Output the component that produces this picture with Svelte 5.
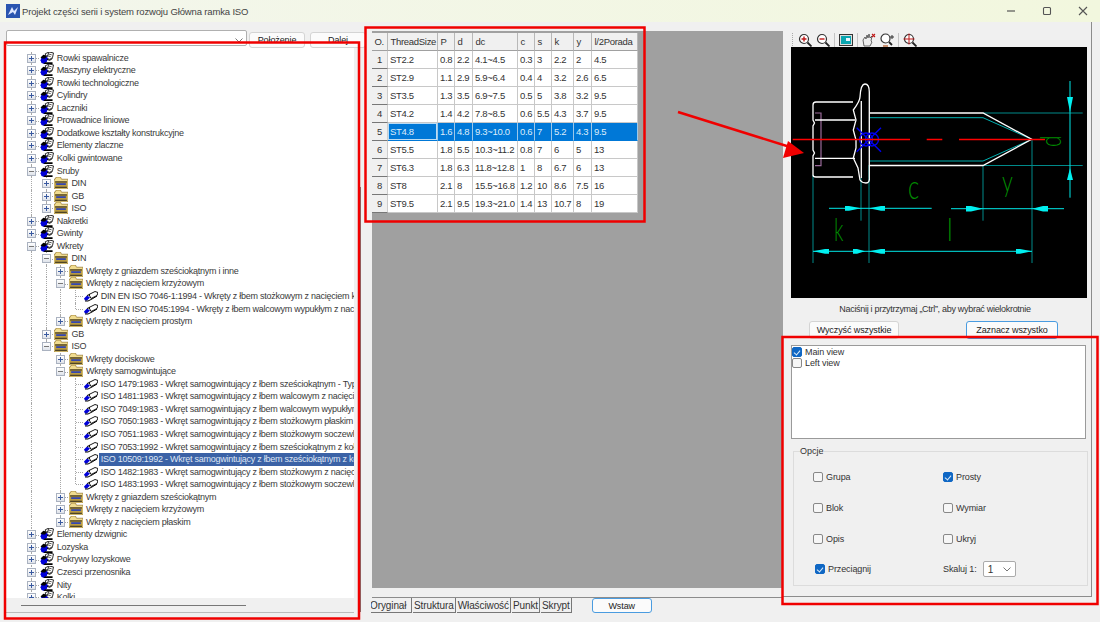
<script>
  // tree rows: l = level, t = label, o = open state (undefined means leaf)
  const rows = [
    { l: 0, t: "Rowki spawalnicze", o: false },
    { l: 0, t: "Maszyny elektryczne", o: false },
    { l: 0, t: "Rowki technologiczne", o: false },
    { l: 0, t: "Cylindry", o: false },
    { l: 0, t: "Laczniki", o: false },
    { l: 0, t: "Prowadnice liniowe", o: false },
    { l: 0, t: "Dodatkowe kształty konstrukcyjne", o: false },
    { l: 0, t: "Elementy zlaczne", o: false },
    { l: 0, t: "Kolki gwintowane", o: false },
    { l: 0, t: "Sruby", o: true },
    { l: 1, t: "DIN", o: false },
    { l: 1, t: "GB", o: false },
    { l: 1, t: "ISO", o: false },
    { l: 0, t: "Nakretki", o: false },
    { l: 0, t: "Gwinty", o: false },
    { l: 0, t: "Wkrety", o: true },
    { l: 1, t: "DIN", o: true },
    { l: 2, t: "Wkręty z gniazdem sześciokątnym i inne", o: false },
    { l: 2, t: "Wkręty z nacięciem krzyżowym", o: true },
    { l: 3, t: "DIN EN ISO 7046-1:1994 - Wkręty z łbem stożkowym z nacięciem krzyżowym" },
    { l: 3, t: "DIN EN ISO 7045:1994 - Wkręty z łbem walcowym wypukłym z nacięciem krzyżowym" },
    { l: 2, t: "Wkręty z nacięciem prostym", o: false },
    { l: 1, t: "GB", o: false },
    { l: 1, t: "ISO", o: true },
    { l: 2, t: "Wkręty dociskowe", o: false },
    { l: 2, t: "Wkręty samogwintujące", o: true },
    { l: 3, t: "ISO 1479:1983 - Wkręt samogwintujący z łbem sześciokątnym - Typ AB" },
    { l: 3, t: "ISO 1481:1983 - Wkręt samogwintujący z łbem walcowym z nacięciem" },
    { l: 3, t: "ISO 7049:1983 - Wkręt samogwintujący z łbem walcowym wypukłym" },
    { l: 3, t: "ISO 7050:1983 - Wkręt samogwintujący z łbem stożkowym płaskim" },
    { l: 3, t: "ISO 7051:1983 - Wkręt samogwintujący z łbem stożkowym soczewkowym" },
    { l: 3, t: "ISO 7053:1992 - Wkręt samogwintujący z łbem sześciokątnym z kołnierzem" },
    { l: 3, t: "ISO 10509:1992 - Wkręt samogwintujący z łbem sześciokątnym z kołnierzem", sel: true },
    { l: 3, t: "ISO 1482:1983 - Wkręt samogwintujący z łbem stożkowym z nacięciem" },
    { l: 3, t: "ISO 1483:1993 - Wkręt samogwintujący z łbem stożkowym soczewkowym" },
    { l: 2, t: "Wkręty z gniazdem sześciokątnym", o: false },
    { l: 2, t: "Wkręty z nacięciem krzyżowym", o: false },
    { l: 2, t: "Wkręty z nacięciem płaskim", o: false },
    { l: 0, t: "Elementy dzwignic", o: false },
    { l: 0, t: "Lozyska", o: false },
    { l: 0, t: "Pokrywy lozyskowe", o: false },
    { l: 0, t: "Czesci przenosnika", o: false },
    { l: 0, t: "Nity", o: false },
    { l: 0, t: "Kolki", o: false },
  ];

  // does another row of this level follow before the parent ends?
  function continues(i, level) {
    for (let j = i + 1; j < rows.length; j++) {
      if (rows[j].l < level) return false;
      if (rows[j].l === level) return true;
    }
    return level === 0;
  }

  const columns = ["ThreadSize", "P", "d", "dc", "c", "s", "k", "y", "l/2Porada"];
  const widths = [16, 50, 17, 18, 45, 17, 17, 22, 18, 46];
  const sizes = [
    ["ST2.2", "0.8", "2.2", "4.1~4.5", "0.3", "3", "2.2", "2", "4.5"],
    ["ST2.9", "1.1", "2.9", "5.9~6.4", "0.4", "4", "3.2", "2.6", "6.5"],
    ["ST3.5", "1.3", "3.5", "6.9~7.5", "0.5", "5", "3.8", "3.2", "9.5"],
    ["ST4.2", "1.4", "4.2", "7.8~8.5", "0.6", "5.5", "4.3", "3.7", "9.5"],
    ["ST4.8", "1.6", "4.8", "9.3~10.0", "0.6", "7", "5.2", "4.3", "9.5"],
    ["ST5.5", "1.8", "5.5", "10.3~11.2", "0.8", "7", "6", "5", "13"],
    ["ST6.3", "1.8", "6.3", "11.8~12.8", "1", "8", "6.7", "6", "13"],
    ["ST8", "2.1", "8", "15.5~16.8", "1.2", "10", "8.6", "7.5", "16"],
    ["ST9.5", "2.1", "9.5", "19.3~21.0", "1.4", "13", "10.7", "8", "19"],
  ];

  const tabs = ["Oryginał", "Struktura", "Właściwość", "Punkt", "Skrypt"];
  const options = [
    { t: "Grupa", on: false },
    { t: "Prosty", on: true },
    { t: "Blok", on: false },
    { t: "Wymiar", on: false },
    { t: "Opis", on: false },
    { t: "Ukryj", on: false },
  ];
</script>

<svg class="defs" width="0" height="0" aria-hidden="true">
  <symbol id="ico-group" viewBox="0 0 14 13">
    <path d="M5 2 9 0l5 1-1 5-3 2-3-1z" fill="#fff" stroke="#000" stroke-width=".9" />
    <path d="M8 2l4 1M7 4l4 1M9 0 7 6" stroke="#000" stroke-width=".7" />
    <path d="M1 6l5-1 2 2-1 3-3 3-3-1-1-3z" fill="#0000d8" />
    <path d="M0 6l3-3 4 1-2 3-3 0z" fill="#000" />
    <path d="M5 11h8v2H3z" fill="#000" />
    <path d="M7 8l3 1 3-2" stroke="#000" stroke-width="1" fill="none" />
  </symbol>
  <symbol id="ico-folder" viewBox="0 0 13 11">
    <path d="M0 2h1l1-2h4l1 2h6v9H0z" fill="#f0dc90" stroke="#8a6a20" stroke-width=".6" />
    <rect x="1" y="4" width="11" height="6" fill="#b89a40" />
    <path d="M1 4.500h11" stroke="#3a3420" />
    <path d="M2 6.500h9" stroke="#1030d0" stroke-width="1.300" />
    <path d="M1 9.500h11" stroke="#3a3420" />
  </symbol>
  <symbol id="ico-part" viewBox="0 0 14 11">
    <path d="M5 4 11 1l3 1-1 3-6 3z" fill="#fff" stroke="#000" stroke-width=".9" />
    <path d="M0 8l3-3 3 2-3 3H1z" fill="#0000d8" />
    <path d="M1 10.500h3l4-2 5-3" stroke="#000" stroke-width="1" fill="none" />
    <path d="M3 5l3-1" stroke="#000" stroke-width="1" />
  </symbol>
</svg>

<div class="window">
  <header class="titlebar">
    <svg class="appicon" width="14" height="14" viewBox="0 0 14 14">
      <rect width="14" height="14" fill="#2a55b0" />
      <path d="M2 11 6 3l2 4 4-4-3 8-2-3z" fill="#dfe8ff" />
    </svg>
    <span class="title">Projekt części serii i system rozwoju Główna ramka ISO</span>
    <div class="winbtns">
      <svg width="10" height="10" viewBox="0 0 10 10"><path d="M1 5h8" stroke="#555" stroke-width="1.2" /></svg>
      <svg width="10" height="10" viewBox="0 0 10 10"><rect x="1.5" y="1.5" width="7" height="7" rx="1" fill="none" stroke="#555" stroke-width="1.1" /></svg>
      <svg width="10" height="10" viewBox="0 0 10 10"><path d="M1 1l8 8M9 1l-8 8" stroke="#555" stroke-width="1.1" /></svg>
    </div>
  </header>

  <div class="main">
    <section class="left">
      <div class="searchbar">
        <div class="combo">
          <svg class="chev" width="8" height="5" viewBox="0 0 8 5"><path d="M.5.5 4 4 7.5.5" fill="none" stroke="#777" /></svg>
        </div>
        <button class="btn">Położenie</button>
        <button class="btn">Dalej</button>
      </div>
      <div class="tree">
        {#each rows as row, i}
          <div class="row">
            {#each Array(row.l) as _, k}
              <span class="cell">{#if continues(i, k)}<i class="v"></i>{/if}</span>
            {/each}
            <span class="cell">
              <i class="v" class:half={!continues(i, row.l)}></i>
              <i class="h"></i>
              {#if row.o !== undefined}
                <b class="toggle">
                  <svg width="9" height="9" viewBox="0 0 9 9">
                    <path d="M2 4.5h5" stroke={row.o ? "#777" : "#3a5aa0"} />
                    {#if !row.o}<path d="M4.5 2v5" stroke="#3a5aa0" />{/if}
                  </svg>
                </b>
              {/if}
            </span>
            <svg class="ico" width="14" height="12">
              <use href={row.o === undefined ? "#ico-part" : row.l === 0 ? "#ico-group" : "#ico-folder"} />
            </svg>
            <span class="label" class:sel={row.sel}>{row.t}</span>
          </div>
        {/each}
      </div>
      <div class="hscroll"><div class="thumb"></div></div>
    </section>

    <section class="center">
      <div class="grey">
        <table>
          <colgroup>
            {#each widths as w}<col style="width:{w}px" />{/each}
          </colgroup>
          <thead>
            <tr>
              <th class="corner">O.</th>
              {#each columns as c}<th>{c}</th>{/each}
            </tr>
          </thead>
          <tbody>
            {#each sizes as s, i}
              <tr class:active={i === 4}>
                <th class="rowhead">{i + 1}</th>
                {#each s as v}<td>{v}</td>{/each}
              </tr>
            {/each}
          </tbody>
        </table>
      </div>
      <div class="tabs">
        {#each tabs as t, i}
          <span class="tab" class:current={i === 0}><span>{t}</span></span>
        {/each}
        <button class="btn wstaw">Wstaw</button>
      </div>
    </section>

    <section class="right">
      <div class="tools">
        <span class="grip"></span>
        <svg width="14" height="14" viewBox="0 0 14 14"><circle cx="6" cy="6" r="4.5" fill="#fff" stroke="#333" stroke-width="1.2" /><path d="M3.5 6h5M6 3.5v5" stroke="#c01818" stroke-width="1.4" /><path d="M9.5 9.5l4 4" stroke="#222" stroke-width="1.8" /></svg>
        <svg width="14" height="14" viewBox="0 0 14 14"><circle cx="6" cy="6" r="4.5" fill="#fff" stroke="#333" stroke-width="1.2" /><path d="M3.5 6h5" stroke="#c01818" stroke-width="1.4" /><path d="M9.5 9.5l4 4" stroke="#222" stroke-width="1.8" /></svg>
        <span class="sep"></span>
        <svg width="14" height="12" viewBox="0 0 14 12"><rect x=".5" y=".5" width="13" height="11" fill="#ddd" stroke="#333" /><rect x="2" y="2" width="10" height="8" fill="#0aa5b0" /><rect x="7" y="4" width="4" height="3" fill="#e8f4ff" /></svg>
        <span class="sep"></span>
        <svg width="14" height="14" viewBox="0 0 14 14"><path d="M2 13 1 7l2-3 1 2 1-4 1 3 1-4 1 4 2-2-1 5 1 1-2 4z" fill="#eee" stroke="#444" stroke-width=".8" /><path d="M10 1l3 3M13 1l-3 3" stroke="#c01818" stroke-width="1.1" /></svg>
        <svg width="14" height="14" viewBox="0 0 14 14"><circle cx="5.5" cy="5.5" r="4.5" fill="#fff" stroke="#333" stroke-width="1.2" /><path d="M9 9l3 3" stroke="#222" stroke-width="1.8" /><path d="M10 4h4M12 2v4" stroke="#333" /><path d="M3 13h5" stroke="#c89070" stroke-width="2" /></svg>
        <span class="sep"></span>
        <svg width="14" height="14" viewBox="0 0 14 14"><circle cx="6" cy="6" r="4.5" fill="#fff" stroke="#333" stroke-width="1.2" /><path d="M6 .5v11M.5 6h11" stroke="#c01818" /><path d="M9.5 9.5l4 4" stroke="#222" stroke-width="1.8" /></svg>
      </div>

      <svg class="cad" viewBox="791 47 296 251" width="296" height="251">
        <g fill="none" stroke="#008a8a" stroke-width="1">
          <path d="M813 175v88M861 178v42.700M869 165v98M983 165v55.700M1032 140v123" />
          <path d="M983 113h99.700M983 165.500h99.700" />
          <path d="M869.500 117.700H983l48.700 21.600-48.700 21.700H869.500" stroke="#00b0b0" />
        </g>
        <g fill="none" stroke="#00e8e8" stroke-width="1">
          <path d="M1070 81v116.700M829 208.300h102.700M951 208.700h113M813 251.300h219" />
        </g>
        <g fill="#00f0f0">
          <path d="M1067 97h6l-3 15zM1067 180h6l-3-12z" />
          <path d="M845 206h4l12 2.300-12 2.400h-4zM885 206h-4l-12 2.300 12 2.400h4z" />
          <path d="M966 206h5l12 2.700-12 2.700h-5zM1048 206h-5l-11 2.700 11 2.700h5z" />
          <path d="M829 249h-4l-12 2.300 12 2.400h4zM853 249h4l8 2.300-8 2.400h-4zM885 249h-4l-12 2.300 12 2.400h4zM1016 249h4l12 2.300-12 2.400h-4z" />
        </g>
        <path d="M815 113h6v52.700h-6" fill="none" stroke="#9a6a9a" stroke-width="1.200" />
        <g fill="none" stroke="#fff" stroke-width="1.300">
          <path d="M853 102h-37q-3 0-3 3v15l1.500 3-1.500 3v24l1.500 3-1.500 3v19q0 2 3 2h37" />
          <path d="M815 120h40M815 158.300h40M861.300 101v77" />
          <path d="M869.500 113H983l48.700 26.300L983 165.500H869.500" />
          <path d="M869.300 92q0-8-4.300-8t-5 13q0 4-6.700 13l2.700 10-2.700 10 2.700 10 0 8-2.700 10 4.700 10 2 12q2 3 6 3t3.300-6z" />
        </g>
        <g fill="none" stroke="#0000f0" stroke-width="1.400">
          <path d="M856.700 127.700l24.300 24M881 127.700l-24.300 24" />
          <circle cx="866" cy="139.500" r="6.500" />
          <circle cx="872" cy="139.500" r="6.500" />
        </g>
        <path d="M792.700 139.500H910M926.700 139.500h15.600M959 139.500h86" stroke="#ff0000" stroke-width="1.400" fill="none" />
        <g class="cadtext">
          <text transform="translate(908 199) scale(.72 1)" font-size="33">c</text>
          <text transform="translate(1002 192) scale(.72 1)" font-size="30">y</text>
          <text transform="translate(834 241) scale(.62 1)" font-size="32">k</text>
          <text transform="translate(947 241) scale(.8 1)" font-size="32">l</text>
          <text transform="translate(1061 147) rotate(-90) scale(.7 1)" font-size="30">d</text>
        </g>
      </svg>

      <p class="hint">Naciśnij i przytrzymaj „Ctrl”, aby wybrać wielokrotnie</p>

      <div class="pair">
        <button class="btn">Wyczyść wszystkie</button>
        <button class="btn primary">Zaznacz wszystko</button>
      </div>

      <div class="list">
        <label><span class="check on"></span>Main view</label>
        <label><span class="check"></span>Left view</label>
      </div>

      <fieldset>
        <legend>Opcje</legend>
        <div class="opts">
          {#each options as o}
            <label><span class="check" class:on={o.on}></span>{o.t}</label>
          {/each}
          <label class="drag"><span class="check on"></span>Przeciągnij</label>
          <div class="scale">
            <span>Skaluj 1:</span>
            <div class="mini">1
              <svg width="8" height="5" viewBox="0 0 8 5"><path d="M.5.5 4 4 7.5.5" fill="none" stroke="#777" /></svg>
            </div>
          </div>
        </div>
      </fieldset>
    </section>
  </div>

  <!-- red annotations sitting over the screenshot -->
  <svg class="marks" width="1100" height="622" viewBox="0 0 1100 622">
    <g fill="none" stroke="#f00000" stroke-width="2.500">
      <rect x="5" y="42.500" width="354" height="576" />
      <rect x="365.500" y="27.500" width="279" height="194" />
      <rect x="782.500" y="337" width="315" height="267" />
    </g>
    <path d="M678 112 790 147" stroke="#f00000" stroke-width="2.500" />
    <path d="M804 153 783 158 788 141z" fill="#f00000" />
  </svg>
</div>

<style>
  :global(body) {
    margin: 0;
    background: #f0f0f0;
  }

  .defs {
    position: absolute;
  }

  .window {
    position: relative;
    width: 1100px;
    height: 622px;
    overflow: hidden;
    font-family: "Liberation Sans", Arial, sans-serif;
    font-size: 9px;
    color: #333;
    background: #f0f0f0;
  }

  .titlebar {
    height: 22px;
    display: flex;
    align-items: center;
    padding-left: 6px;
    background: linear-gradient(90deg, #f3f6ec, #f2f7de);
  }

  .title {
    margin-left: 2px;
    font-size: 9.500px;
    letter-spacing: -0.15px;
    color: #444;
  }

  .winbtns {
    margin-left: auto;
    margin-right: 12px;
    display: flex;
    gap: 26px;
  }

  .main {
    display: flex;
    height: 600px;
  }

  .left {
    width: 372px;
    flex: none;
    padding-top: 8px;
    box-sizing: border-box;
    /* splitter edge just right of the tree */
    background: linear-gradient(#777, #777) no-repeat 360px 165px / 1px 425px;
  }

  .searchbar {
    display: flex;
    height: 14px;
    margin-left: 6px;
  }

  .combo {
    width: 241px;
    height: 16px;
    background: #fff;
    border: 1px solid #b0b0b0;
    border-radius: 2px;
    box-sizing: border-box;
    position: relative;
  }

  .chev {
    position: absolute;
    right: 3px;
    top: 7px;
  }

  .btn {
    font: inherit;
    color: #222;
    background: #fbfbfb;
    border: 1px solid #d4d4d4;
    border-radius: 3px;
    padding: 0;
    height: 16px;
    letter-spacing: -0.1px;
  }

  .searchbar .btn {
    width: 56px;
    margin-left: 2px;
    margin-top: 2px;
  }

  .searchbar .btn + .btn {
    margin-left: 5px;
  }

  .tree {
    margin: 0 0 0 6px;
    width: 348px;
    height: 554px;
    padding-top: 7.600px;
    box-sizing: border-box;
    background: #fff;
    overflow: hidden;
  }

  .row {
    display: flex;
    height: 12.550px;
    white-space: nowrap;
    padding-left: 18px;
  }

  .cell {
    width: 14.700px;
    flex: none;
    position: relative;
  }

  .v {
    position: absolute;
    left: 7px;
    top: 0;
    bottom: 0;
    border-left: 1px dotted #a8a8a8;
  }

  .v.half {
    bottom: 50%;
  }

  .h {
    position: absolute;
    left: 8px;
    right: 0;
    top: 50%;
    border-top: 1px dotted #a8a8a8;
  }

  .toggle {
    position: absolute;
    left: 3px;
    top: 2px;
    width: 9px;
    height: 9px;
    box-sizing: border-box;
    border: 1px solid #aab2c0;
    background: linear-gradient(#fff, #dfe3ea);
  }

  .toggle svg {
    position: absolute;
    left: -1px;
    top: -1px;
  }

  .ico {
    flex: none;
    margin-left: 1px;
    margin-top: 0;
    width: 14px;
    height: 12px;
  }

  .label {
    margin-left: 2px;
    padding: 0 1px;
    line-height: 12.550px;
    letter-spacing: -0.25px;
    color: #3a3a3a;
    flex: 1;
    overflow: hidden;
  }

  .label.sel {
    background: #3b62a6;
    color: #dfe6f4;
    margin-left: 1px;
    padding-left: 2px;
  }

  .hscroll {
    margin-left: 6px;
    width: 348px;
    height: 14px;
    border-bottom: 1px solid #bbb;
    position: relative;
  }

  .thumb {
    position: absolute;
    left: 15px;
    top: 7px;
    width: 225px;
    height: 1px;
    background: #777;
  }

  .center {
    width: 411px;
    flex: none;
  }

  .grey {
    margin-top: 9px;
    height: 557px;
    background: #a0a0a0;
    padding-top: 2px;
    box-sizing: border-box;
  }

  table {
    border-collapse: separate;
    border-spacing: 0;
    table-layout: fixed;
    width: 266px;
    font-size: 9.500px;
    letter-spacing: -0.3px;
    color: #333;
  }

  th {
    height: 18px;
    padding: 0 0 0 2.500px;
    box-sizing: border-box;
    font-weight: normal;
    text-align: left;
    background: #f0f0f0;
    border-right: 1px solid #b8b8b8;
    border-bottom: 1px solid #a0a0a0;
    white-space: nowrap;
    overflow: hidden;
  }

  .rowhead {
    text-align: center;
    padding: 0;
    border-bottom: 1px solid #777;
    border-right: 1px solid #ccc;
  }

  td {
    height: 18px;
    padding: 0 0 0 2px;
    box-sizing: border-box;
    background: #fff;
    border-right: 1px solid #c8c8c8;
    border-bottom: 1px solid #c8c8c8;
    white-space: nowrap;
    overflow: hidden;
  }

  .active td {
    background: #0078d7;
    color: #dcecfa;
    border-right-color: #9cc8ea;
    border-bottom-color: #0078d7;
  }

  .active td:first-of-type {
    box-shadow: inset 0 0 0 1px #bcdcf4;
  }

  .tabs {
    display: flex;
    height: 33px;
    margin-top: 9px;
    border-top: 1px solid #8c8c8c;
    align-items: flex-start;
    font-size: 10px;
    letter-spacing: -0.1px;
  }

  .tab {
    height: 14px;
    overflow: hidden;
    border-right: 1px solid #777;
    border-bottom: 1px solid #777;
    padding: 0 1px;
    line-height: 15px;
    color: #333;
    flex: none;
    margin-right: 1px;
  }

  .tab.current {
    width: 40px;
    padding: 0;
    margin-left: -1px;
    background: #f0f0f0;
  }

  .tab.current span {
    margin-left: -1px;
    display: block;
  }

  .wstaw {
    width: 60px;
    height: 15px;
    margin-left: 19px;
    border-color: #4a9ce0;
    font-size: 9px;
  }

  .right {
    width: 309px;
    flex: none;
    border-right: 1px solid #8c8c8c;
    border-bottom: 1px solid #8c8c8c;
    height: 575px;
    margin-top: 0;
    padding: 10px 0 0 8px;
    box-sizing: border-box;
  }

  .tools {
    display: flex;
    align-items: center;
    height: 15px;
    gap: 4px;
    padding-left: 7px;
    position: relative;
  }

  .grip {
    position: absolute;
    left: 1px;
    top: 1px;
    height: 13px;
    border-left: 1px dotted #aaa;
  }

  .sep {
    width: 1px;
    height: 14px;
    background: #c4c4c4;
  }

  .cad {
    display: block;
    background: #000;
  }

  .cadtext text {
    fill: #008a00;
    font-family: "Lato", "Liberation Sans", sans-serif;
    font-weight: 300;
  }

  .hint {
    margin: 5px 0 0;
    padding-right: 12px;
    height: 12px;
    text-align: center;
    font-size: 9px;
    letter-spacing: -0.3px;
    color: #333;
    line-height: 12px;
  }

  .pair {
    display: flex;
    margin-top: 6px;
    padding-left: 18px;
    gap: 67px;
    height: 18px;
  }

  .pair .btn {
    width: 90px;
    height: 18px;
  }

  .pair .primary {
    width: 92px;
    border-color: #4a9ce0;
  }

  .list {
    width: 295px;
    height: 94px;
    margin-top: 6px;
    background: #fff;
    border: 1px solid #9a9a9a;
    box-sizing: border-box;
  }

  .list label {
    display: flex;
    align-items: center;
    height: 11px;
    gap: 3px;
    letter-spacing: -0.1px;
  }

  .check {
    width: 10px;
    height: 10px;
    flex: none;
    box-sizing: border-box;
    border: 1px solid #888;
    border-radius: 2px;
    background: #f6f6f6;
    position: relative;
  }

  .check.on {
    background: #0f67c4;
    border-color: #0f67c4;
  }

  .check.on::after {
    content: "";
    position: absolute;
    left: 2px;
    top: 1px;
    width: 3px;
    height: 5px;
    border: solid #dcecfa;
    border-width: 0 1px 1px 0;
    transform: rotate(40deg);
  }

  fieldset {
    width: 295px;
    height: 140px;
    margin: 7px 0 0 2px;
    padding: 0;
    box-sizing: border-box;
    border: 1px solid #dcdcdc;
    min-width: 0;
  }

  legend {
    margin-left: 6px;
    padding: 0;
    line-height: 10px;
  }

  .opts {
    display: grid;
    grid-template-columns: 130px 1fr;
    grid-auto-rows: 30.800px;
    padding: 11px 0 0 19px;
  }

  .opts label,
  .scale {
    display: flex;
    align-items: center;
    gap: 3px;
    height: 20px;
    letter-spacing: -0.1px;
  }

  .drag {
    margin-left: 2px;
  }

  .scale {
    gap: 6px;
  }

  .mini {
    width: 33px;
    height: 16px;
    box-sizing: border-box;
    background: #fff;
    border: 1px solid #aaa;
    border-radius: 2px;
    display: flex;
    align-items: center;
    justify-content: space-between;
    padding: 0 4px;
    font-size: 10px;
  }

  .marks {
    position: absolute;
    left: 0;
    top: 0;
    pointer-events: none;
  }
</style>
